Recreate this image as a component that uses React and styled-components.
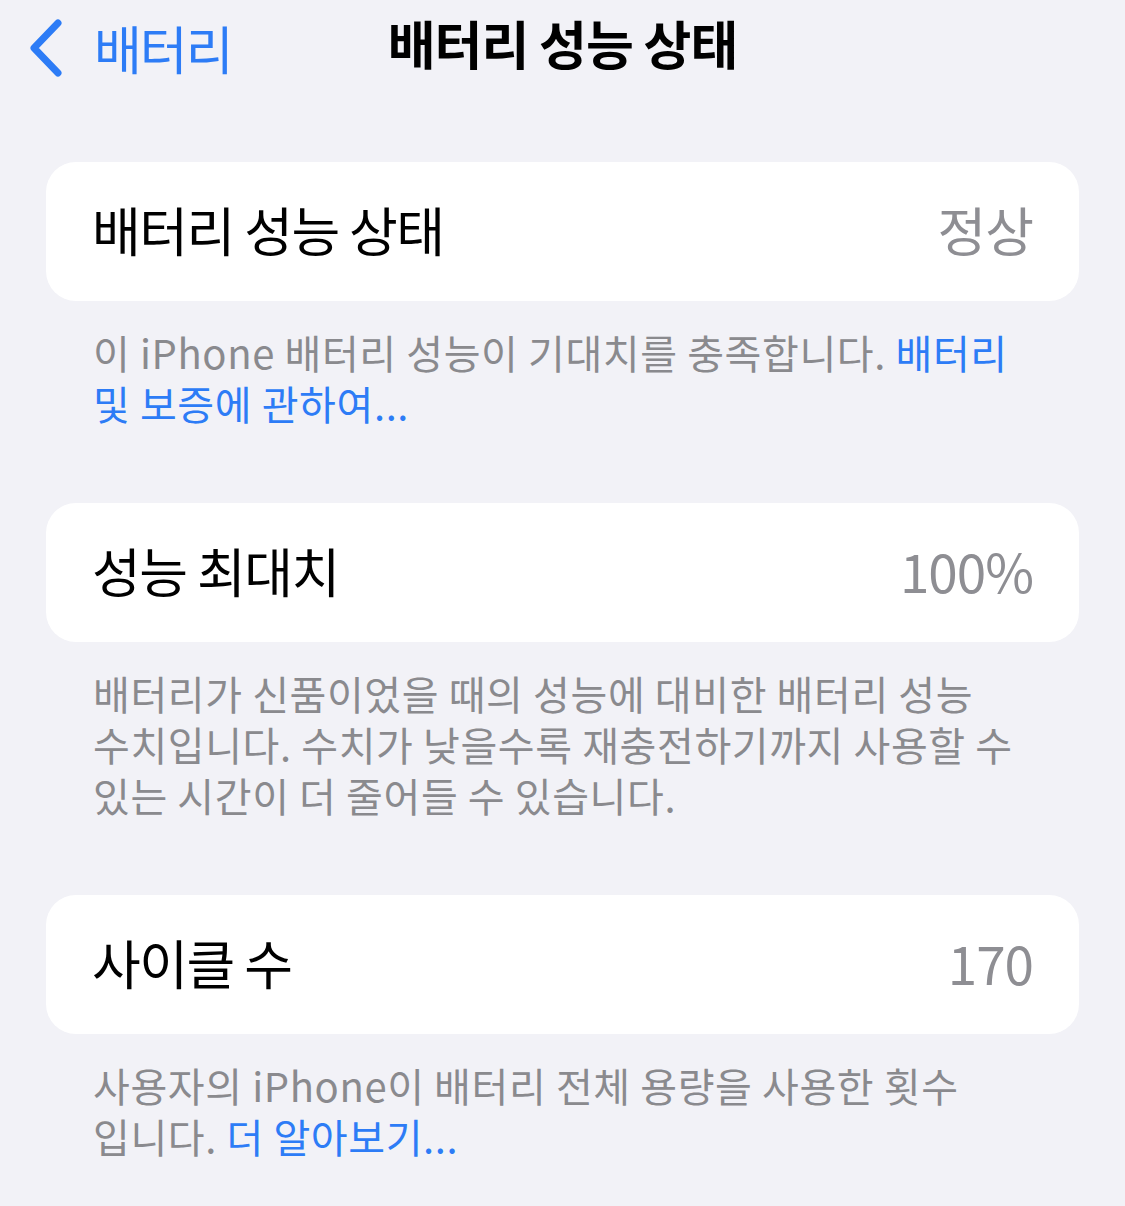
import React from 'react';
import styled, { createGlobalStyle } from 'styled-components';

const GlobalStyle = createGlobalStyle`
  html, body {
    margin: 0;
    padding: 0;
    background: #f2f2f7;
  }
  body {
    font-family: "Noto Sans CJK KR", "Noto Sans", sans-serif;
    -webkit-font-smoothing: antialiased;
  }
`;

const Page = styled.div`
  width: 1125px;
  height: 1206px;
  background: #f2f2f7;
  overflow: hidden;
`;

const NavBar = styled.div`
  position: relative;
  height: 92px;
  display: flex;
  align-items: center;
  justify-content: center;
`;

const BackButton = styled.div`
  position: absolute;
  left: 26px;
  top: 10px;
  display: flex;
  align-items: center;
  gap: 28px;
  color: #2d7cf6;
  font-size: 52px;
  letter-spacing: -2px;
`;

const Title = styled.h1`
  margin: 0;
  margin-top: -8px;
  font-size: 52px;
  font-weight: 700;
  color: #000;
  letter-spacing: -1px;
`;

const Content = styled.div`
  padding: 70px 46px 0 46px;
  display: flex;
  flex-direction: column;
`;

const Section = styled.section`
  margin-bottom: 74px;
`;

const Card = styled.div`
  height: 139px;
  background: #fff;
  border-radius: 30px;
  display: flex;
  align-items: center;
  justify-content: space-between;
  padding: 0 46px;
  box-sizing: border-box;
`;

const Label = styled.span`
  font-size: 53px;
  color: #000;
  letter-spacing: -1.5px;
  margin-top: -6px;
`;

const Value = styled.span`
  font-size: 53px;
  color: #8e8e93;
  letter-spacing: -1px;
  margin-top: -6px;
`;

const Footer = styled.div`
  margin: 26px 0 0 47px;
  font-size: 40px;
  color: #8a8a8e;
  letter-spacing: 0.6px;
  white-space: nowrap;
`;

const Line = styled.div`
  height: 51px;
  line-height: 51px;
`;

const Link = styled.span`
  color: #2d7cf6;
`;

function Chevron() {
  return (
    <svg width="40" height="62" viewBox="0 0 40 62">
      <path
        d="M32 6 L8 31 L32 56"
        fill="none"
        stroke="#2d7cf6"
        strokeWidth="7"
        strokeLinecap="round"
        strokeLinejoin="round"
      />
    </svg>
  );
}

export default function App() {
  return (
    <Page>
      <GlobalStyle />
      <NavBar>
        <BackButton>
          <Chevron />
          <span>배터리</span>
        </BackButton>
        <Title>배터리 성능 상태</Title>
      </NavBar>
      <Content>
        <Section>
          <Card>
            <Label>배터리 성능 상태</Label>
            <Value>정상</Value>
          </Card>
          <Footer>
            <Line>
              이 iPhone 배터리 성능이 기대치를 충족합니다. <Link>배터리</Link>
            </Line>
            <Line>
              <Link>및 보증에 관하여...</Link>
            </Line>
          </Footer>
        </Section>
        <Section>
          <Card>
            <Label>성능 최대치</Label>
            <Value>100%</Value>
          </Card>
          <Footer>
            <Line>배터리가 신품이었을 때의 성능에 대비한 배터리 성능</Line>
            <Line>수치입니다. 수치가 낮을수록 재충전하기까지 사용할 수</Line>
            <Line>있는 시간이 더 줄어들 수 있습니다.</Line>
          </Footer>
        </Section>
        <Section>
          <Card>
            <Label>사이클 수</Label>
            <Value>170</Value>
          </Card>
          <Footer>
            <Line>사용자의 iPhone이 배터리 전체 용량을 사용한 횟수</Line>
            <Line>
              입니다. <Link>더 알아보기...</Link>
            </Line>
          </Footer>
        </Section>
      </Content>
    </Page>
  );
}
